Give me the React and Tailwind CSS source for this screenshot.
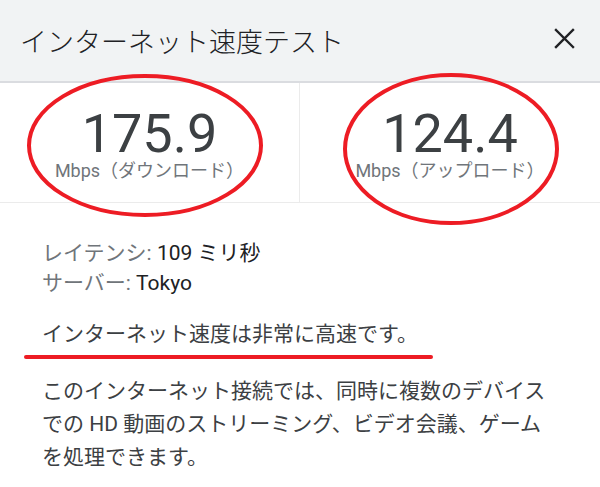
import React from 'react';

const FONT = { fontFamily: 'Roboto, "Noto Sans CJK JP", sans-serif' };

const Stat = ({ value, label, divider }) => (
  <div className={`flex flex-col items-center pt-[27px] ${divider ? 'border-r border-[#ebebeb]' : ''}`}>
    <div className="text-[54px] leading-[48px] text-[#3c4043]">{value}</div>
    <div className="mt-[3px] text-[18px] leading-[20px] text-[#70757a]">{label}</div>
  </div>
);

const App = () => {
  return (
    <div className="relative w-[600px] h-[487px] overflow-hidden bg-white" style={FONT}>
      {/* header */}
      <div className="flex items-start justify-between h-[83px] bg-[#f1f3f4] border-b-2 border-[#dadce0]">
        <h1 className="pl-[20px] pt-[30px] text-[27px] leading-[27px] font-light text-[#202124]">
          インターネット速度テスト
        </h1>
        <button className="mt-[28px] mr-[25px] w-[21px] h-[21px] text-[#202124]">
          <svg viewBox="0 0 21 21" width="21" height="21" fill="none" stroke="currentColor" strokeWidth="2.4" strokeLinecap="square">
            <path d="M2 2 L19 19 M19 2 L2 19" />
          </svg>
        </button>
      </div>

      {/* results */}
      <div className="grid grid-cols-2 h-[120px] border-b border-[#ebebeb]">
        <Stat value="175.9" label="Mbps（ダウンロード）" divider />
        <Stat value="124.4" label="Mbps（アップロード）" />
      </div>

      {/* details */}
      <div className="pl-[42px] pr-[43px] pt-[35px] text-[21px]">
        <div className="leading-[30px]">
          <div>
            <span className="text-[#70757a]">レイテンシ:</span>{' '}
            <span className="text-[#202124]">109 ミリ秒</span>
          </div>
          <div>
            <span className="text-[#70757a]">サーバー:</span>{' '}
            <span className="text-[#202124]">Tokyo</span>
          </div>
        </div>
        <p className="mt-[21px] leading-[30px] text-[#3c4043]">インターネット速度は非常に高速です。</p>
        <p className="mt-[26px] leading-[33px] text-[#3c4043]">
          このインターネット接続では、同時に複数のデバイスでの HD 動画のストリーミング、ビデオ会議、ゲームを処理できます。
        </p>
      </div>

      {/* red annotations drawn over the screenshot */}
      <svg className="absolute inset-0 pointer-events-none" width="600" height="487" fill="none" stroke="#ed1c24" strokeWidth="4">
        <ellipse cx="145" cy="145.5" rx="116" ry="69.5" />
        <ellipse cx="451" cy="149" rx="106" ry="74" />
        <line x1="26" y1="357" x2="431" y2="357" strokeLinecap="round" />
      </svg>
    </div>
  );
};

export default App;
